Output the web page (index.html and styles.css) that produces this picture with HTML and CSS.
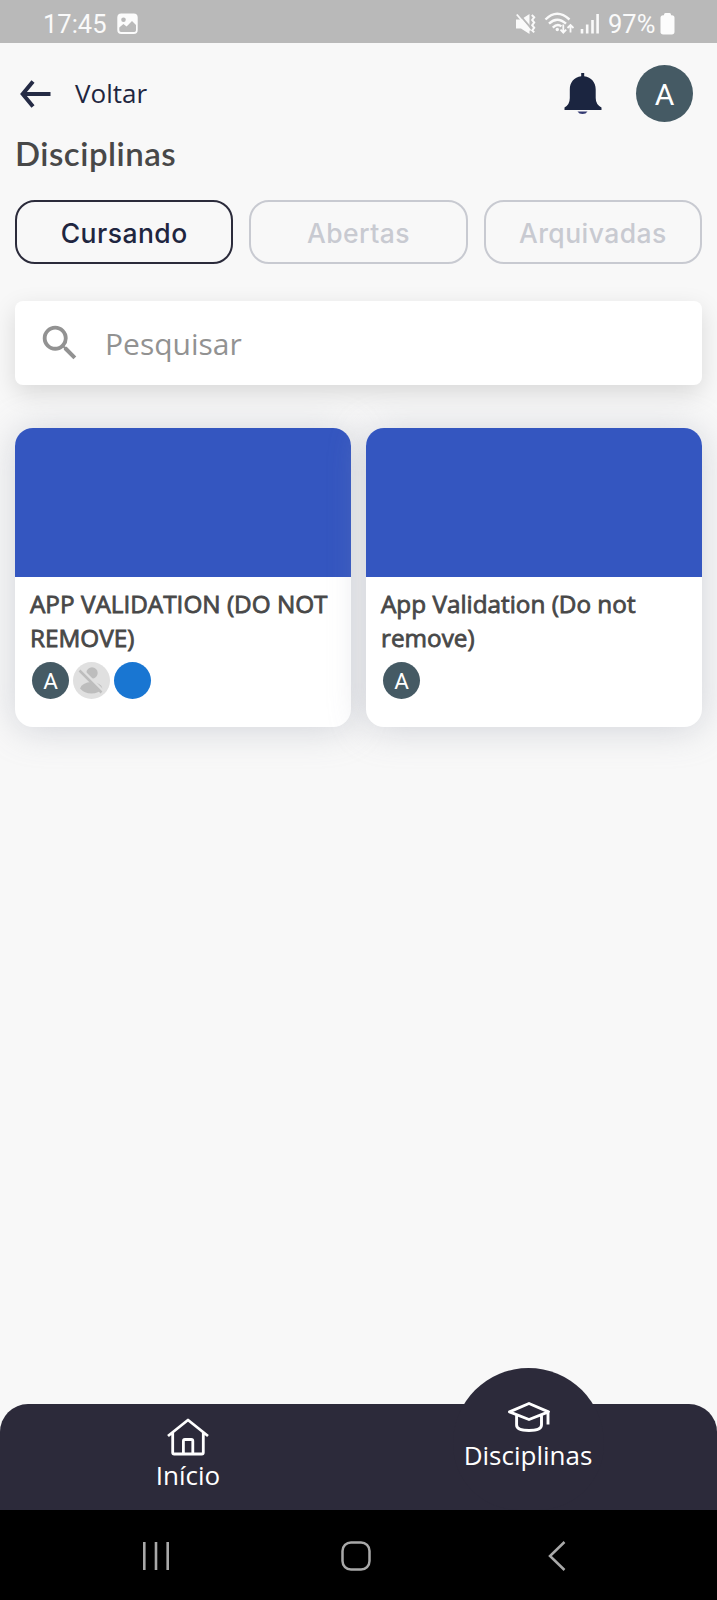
FILE: index.html
```html
<!DOCTYPE html>
<html lang="pt-BR">
<head>
<meta charset="utf-8">
<title>Disciplinas</title>
<link rel="stylesheet" href="styles.css">
</head>
<body>
<div class="screen">
  <div class="status">
    <span class="status-text clock">17:45</span>
    <svg class="gallery" width="21" height="22" viewBox="0 0 21 22"><rect x=".3" y=".5" width="20.4" height="20.6" rx="4" fill="#fcfcfc"/><circle cx="6.5" cy="6.7" r="2.3" fill="#b9b9b9"/><path d="M2.3 14.4 6.4 11l3.2 2.6L15 8l4 4v5.3q0 1.7-1.7 1.7H4q-1.7 0-1.7-1.7z" fill="#b9b9b9"/></svg>
    <svg class="signals" width="86" height="24" viewBox="0 0 86 24" fill="none" stroke="#fafafa">
      <path d="M0 7.500h5L13.500 2v20L5 16.500H0z" fill="#fafafa" stroke="none"/>
      <path d="M2 .8 16 17.300" stroke="#b9b9b9" stroke-width="2"/><path d="M.8 2.500 14.500 18.500" stroke-width="1.900"/>
      <path d="m15.800 3 2.400 2.400-2 2.600 2 2.600-2 2.600 2 2.600-2 2.600 2 2" stroke-width="2"/>
      <path d="M29.500 7.500q11.500-11.500 24 0M33 11.700q8-8 17 0M36.800 15.700q4.500-4.500 8.600-1.300" stroke-width="2.400"/>
      <circle cx="41.300" cy="17.500" r="1.700" fill="#fafafa" stroke="none"/>
      <path d="M47.300 12.500v8M44.500 17.700l2.800 3 2.900-3M54.500 20.500v-7M51.500 16l3-3 3 3" stroke-width="1.800"/>
      <path d="M66 17v4.500M71.200 12.500v9M76.500 8v13.500M81.600 2v19.500" stroke-width="2.600"/>
    </svg>
    <span class="status-text percent">97%</span>
    <svg class="battery" width="15" height="22" viewBox="0 0 15 22" fill="#fcfcfc"><rect x="4" width="7" height="5" rx="1.500"/><rect x=".5" y="2.300" width="14" height="19.200" rx="2.700"/></svg>
  </div>
  <header class="header">
    <svg class="arrow" width="32" height="30" viewBox="0 0 32 30" fill="none" stroke="#252b45" stroke-width="4"><path d="M30.500 15H3M13 2.500 2.700 15 13 27.500"/></svg>
    <span class="back">Voltar</span>
    <svg class="bell" width="38" height="44" viewBox="0 0 38 44"><path d="M13.500 39.500h10q-1.500 2.500-5 2.500t-5-2.500z" fill="#343a72"/><path d="M17.200 1h3v3.300c7.200 1.200 11.500 5.900 11.500 13.200v8.500q0 6.500 5.800 9.500v2.500H.5v-2.500q5.300-3 5.300-9.500v-8.500C5.800 10.200 10 5.500 17.200 4.300z" fill="#1b2540"/></svg>
    <span class="avatar avatar-large">A</span>
  </header>
  <h1 class="title">Disciplinas</h1>
  <div class="tabs">
    <span class="tab tab-active">Cursando</span>
    <span class="tab">Abertas</span>
    <span class="tab">Arquivadas</span>
  </div>
  <div class="search">
    <svg class="search-icon" width="46" height="46" viewBox="0 0 24 24" fill="#929292"><path d="M15.500 14h-.79l-.28-.27A6.471 6.471 0 0 0 16 9.500 6.500 6.500 0 1 0 9.500 16c1.610 0 3.090-.59 4.230-1.570l.27.28v.79l5 4.990L20.490 19l-4.990-5zm-6 0C7.010 14 5 11.990 5 9.500S7.010 5 9.500 5 14 7.010 14 9.500 11.990 14 9.500 14z"/></svg>
    <span class="placeholder">Pesquisar</span>
  </div>
  <main class="cards">
    <article class="card">
      <div class="cover"></div>
      <div class="card-body">
        <h2 class="card-title">APP VALIDATION (DO NOT<br>REMOVE)</h2>
        <div class="people">
          <span class="avatar">A</span>
          <svg width="37" height="37" viewBox="0 0 37 37"><circle cx="18.500" cy="18.500" r="18.500" fill="#e0e0e0"/><g fill="#bdbdbd"><circle cx="19" cy="11" r="5.700"/><path d="M7 26.500q2-6 11.500-6.500 9.500.5 11 6.500-4 5-11 5t-11.500-5z"/></g><path d="m8.500 7.500 22 22" stroke="#e0e0e0" stroke-width="3"/><path d="M6.500 8.500 28.500 30.500" stroke="#bdbdbd" stroke-width="2.500"/></svg>
          <span class="avatar avatar-blue"></span>
        </div>
      </div>
    </article>
    <article class="card">
      <div class="cover"></div>
      <div class="card-body">
        <h2 class="card-title">App Validation (Do not<br>remove)</h2>
        <div class="people"><span class="avatar">A</span></div>
      </div>
    </article>
  </main>
  <nav class="nav">
    <div class="nav-item home">
      <svg width="42" height="38" viewBox="0 0 42 38" fill="none" stroke="#fff" stroke-width="2.800" stroke-linejoin="round"><path d="M1 18 21 2l20 16M5.700 15v19.500q0 1.500 1.500 1.500h27.600q1.500 0 1.500-1.500V15"/><path d="M16.400 36V23q0-1.500 1.500-1.500h6.400q1.500 0 1.500 1.500v13"/></svg>
      <span class="nav-label">Início</span>
    </div>
    <div class="nav-item courses">
      <svg width="42" height="30" viewBox="0 0 42 30" fill="none" stroke="#fff" stroke-width="2.900" stroke-linejoin="round"><path d="M1.500 9.800 21 1.500l19.500 8.300L21 17.500zM40 9.500v13M8.600 12.500V23q0 5.500 12.400 5.500T33.500 23V12.500"/></svg>
      <span class="nav-label nav-label-courses">Disciplinas</span>
    </div>
  </nav>
  <footer class="system">
    <svg width="28" height="30" viewBox="0 0 28 30" stroke="#a9a9a9" stroke-width="2.600"><path d="M2.300 1v28M14 1v28M25.700 1v28"/></svg>
    <svg width="30" height="30" viewBox="0 0 30 30" fill="none" stroke="#a9a9a9" stroke-width="2.500"><rect x="1.500" y="1.500" width="27" height="27" rx="8.500"/></svg>
    <svg class="system-back" width="18" height="30" viewBox="0 0 18 30" fill="none" stroke="#a9a9a9" stroke-width="2.500"><path d="M16.500 1 2 15l14.500 14"/></svg>
  </footer>
</div>
</body>
</html>
```
FILE: styles.css
```css
* { box-sizing: border-box; }
body { margin: 0; background: #f8f8f8; font-family: "Open Sans", sans-serif; }
svg { display: block; flex: none; }
h1, h2 { margin: 0; }
.screen { width: 717px; height: 1600px; display: flex; flex-direction: column; overflow: hidden; }
.status { height: 43px; flex: none; display: flex; align-items: center; padding: 5px 0 0 43px; background: #b9b9b9; }
.status-text { font: 25.5px/30px Roboto, sans-serif; color: #fafafa; white-space: nowrap; }
.clock { width: 74px; }
.signals { margin-left: 378px; }
.percent { width: 52px; margin-left: 6px; }
.battery { margin: 0; }
.header { height: 100px; padding: 1px 24px 0 20px; flex: none; display: flex; align-items: center; color: #1f2640; }
.back { margin: -1px 0 0 23px; font-size: 26px; }
.bell { margin-left: auto; margin-right: 34px; }
.avatar { display: flex; align-items: center; justify-content: center; width: 37px; height: 37px; border-radius: 50%; background: #455a64; color: #fff; font: 22.5px/37px Roboto, sans-serif; padding-top: 2px; }
.avatar-large { width: 57px; height: 57px; font-size: 30px; }
.avatar-blue { background: #1976d2; }
.title { height: 57px; margin: 0 15px; flex: none; font: 600 33px/20px Lato, sans-serif; letter-spacing: .5px; color: #484848; white-space: nowrap; }
.tabs { display: flex; gap: 16px; margin: 0 15px; height: 64px; flex: none; }
.tab { flex: 1; display: flex; align-items: center; justify-content: center; border: 2px solid #c8cad1; border-radius: 20px; color: #c8cad1; font: 500 26.5px/32px Inter, sans-serif; letter-spacing: .45px; padding-top: 1px; }
.tab-active { border-color: #2b2b3b; color: #1f2640; }
.search { height: 84px; margin: 37px 15px 0; padding: 0 0 0 22px; flex: none; display: flex; align-items: center; border-radius: 8px; background: #fff; box-shadow: 0 8px 24px rgba(0,0,0,.13); }
.placeholder { margin-left: 22px; font-size: 30px; color: #929292; }
.cards { display: flex; gap: 15px; margin: 43px 15px 0; flex: none; }
.card { flex: 1; height: 299px; overflow: hidden; border-radius: 18px; background: #fff; box-shadow: 0 2px 36px rgba(160,165,178,.44); }
.cover { height: 149px; background: #3456c0; }
.card-body { padding: 10px 15px; }
.card-title { height: 75px; font-size: 24.3px; line-height: 34px; font-weight: 400; color: #484848; -webkit-text-stroke: .8px #484848; white-space: nowrap; }
.people { display: flex; gap: 4px; padding-left: 2px; }
.nav { position: relative; z-index: 0; display: grid; grid-template-columns: 376px 304px; height: 106px; margin-top: auto; flex: none; background: #2c2a3a; border-radius: 28px 28px 0 0; color: #fff; }
.nav-item { display: flex; flex-direction: column; align-items: center; }
.home { padding-top: 14px; }
.home .nav-label { margin-top: 1px; }
.courses svg { margin: -2px 0 0 1px; }
.courses::before { content: ""; position: absolute; z-index: -1; left: 453px; top: -36px; width: 151px; height: 142px; border-radius: 75.5px 75.5px 66px 66px; background: #2c2a3a; }
.nav-label { font-size: 26px; line-height: 36px; }
.nav-label-courses { margin-top: 5px; }
.system { height: 90px; flex: none; display: flex; align-items: center; gap: 171px; padding: 1px 0 0 142px; background: #000; }
.system-back { margin-left: 6px; }
```
